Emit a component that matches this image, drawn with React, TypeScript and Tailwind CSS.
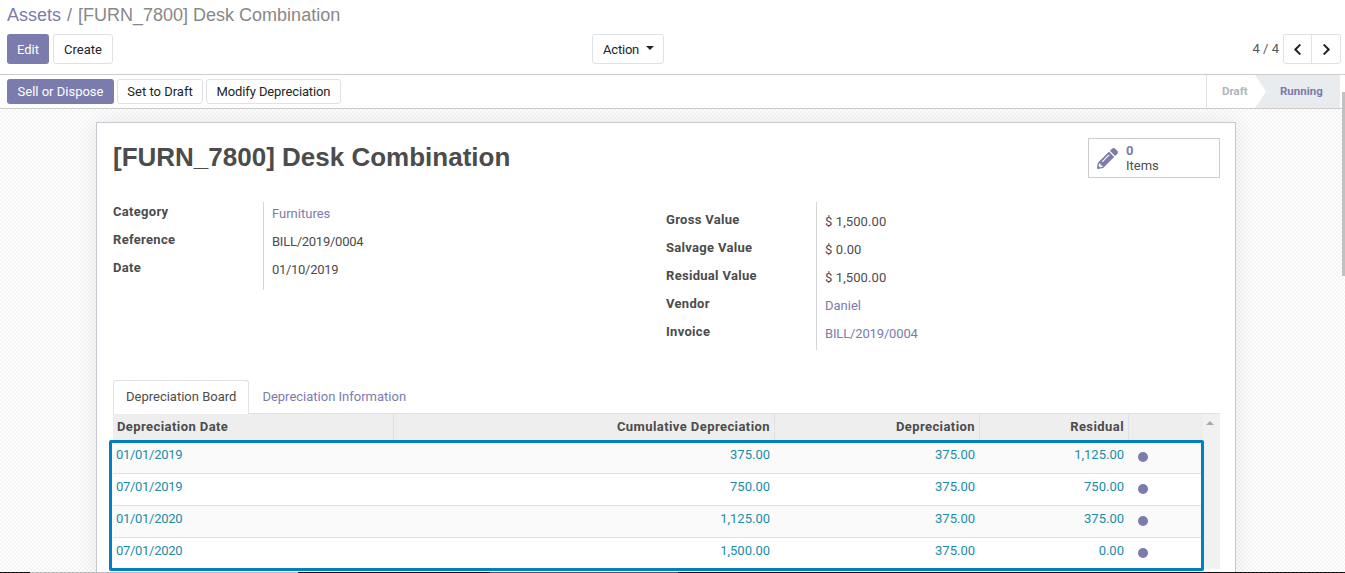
import React from 'react'
import { FaChevronLeft, FaChevronRight, FaPencilAlt } from 'react-icons/fa'

const rows = [
  { date: '01/01/2019', cumulative: '375.00', depreciation: '375.00', residual: '1,125.00' },
  { date: '07/01/2019', cumulative: '750.00', depreciation: '375.00', residual: '750.00' },
  { date: '01/01/2020', cumulative: '1,125.00', depreciation: '375.00', residual: '375.00' },
  { date: '07/01/2020', cumulative: '1,500.00', depreciation: '375.00', residual: '0.00' },
]

const leftFields = [
  { label: 'Category', value: 'Furnitures', link: true },
  { label: 'Reference', value: 'BILL/2019/0004', spacing: 'tracking-[-0.25px]' },
  { label: 'Date', value: '01/10/2019', spacing: 'tracking-[-0.3px]' },
]

const rightFields = [
  { label: 'Gross Value', value: '$ 1,500.00', spacing: 'tracking-[0.1px]' },
  { label: 'Salvage Value', value: '$ 0.00', spacing: 'tracking-[0.1px]' },
  { label: 'Residual Value', value: '$ 1,500.00', spacing: 'tracking-[0.1px]' },
  { label: 'Vendor', value: 'Daniel', link: true },
  { label: 'Invoice', value: 'BILL/2019/0004', link: true, spacing: 'tracking-[-0.15px]' },
]

const btn = 'rounded-[3px] border border-[#dee2e6] bg-white text-[#212529] px-[10px] leading-none whitespace-nowrap'
const btnPrimary = 'rounded-[3px] bg-[#7c7bad] text-white px-[10px] leading-none whitespace-nowrap'
const gridCols = 'grid grid-cols-[281px_381px_205px_149px_74px]'

type Field = { label: string; value: string; link?: boolean; spacing?: string }

const FieldGroup: React.FC<{ fields: Field[]; className: string; labelPad: string; valuePad: string }> = ({
  fields,
  className,
  labelPad,
  valuePad,
}) => (
  <div className={`flex ${className}`}>
    <div className={`w-[150px] shrink-0 ${labelPad}`}>
      {fields.map(f => (
        <div key={f.label} className="h-[28px] font-bold text-[13px] leading-[20px] tracking-[0.3px] text-[#4c4c4c]">
          {f.label}
        </div>
      ))}
    </div>
    <div className={`border-l border-[#d5d5d5] pl-[8px] ${valuePad}`}>
      {fields.map(f => (
        <div
          key={f.label}
          className={`h-[28px] text-[13px] leading-[22px] ${f.spacing ?? ''} ${f.link ? 'text-[#7c7bad]' : 'text-[#4c4c4c]'}`}
        >
          {f.value}
        </div>
      ))}
    </div>
  </div>
)

export default function App() {
  return (
    <div className="h-[573px] w-[1345px] overflow-hidden bg-white relative font-['Roboto',sans-serif]">
      <div className="h-[75px] border-b border-[#ccc] px-[7px]">
        <div className="h-[34px] pt-[3px] text-[18px] leading-[24px] text-[#888] font-['Liberation_Sans',sans-serif]">
          <span className="text-[#7c7bad]">Assets</span>
          <span className="mx-[6px]">/</span>
          <span>[FURN_7800] Desk Combination</span>
        </div>
        <div className="flex h-[30px] items-stretch">
          <div className="flex w-[585px] gap-[4px] text-[13px]">
            <button className={btnPrimary}>Edit</button>
            <button className={btn}>Create</button>
          </div>
          <button className={`${btn} flex items-center text-[13px] tracking-[-0.2px]`}>
            Action
            <span className="ml-[7px] mr-[-1px] mt-[-2px] border-x-[4px] border-t-[4px] border-x-transparent border-t-[#212529]" />
          </button>
          <div className="ml-auto mr-[-3px] flex items-center text-[13px]">
            <span className="mr-[4px] text-[#555]">4 / 4</span>
            <div className="flex h-[30px] rounded-[3px] border border-[#dee2e6] text-[#212529]">
              <span className="flex w-[28px] items-center justify-center border-r border-[#dee2e6]">
                <FaChevronLeft className="h-[13px] w-[13px]" />
              </span>
              <span className="flex w-[28px] items-center justify-center">
                <FaChevronRight className="h-[13px] w-[13px]" />
              </span>
            </div>
          </div>
        </div>
      </div>

      <div className="flex h-[34px] border-b border-[#ccc] pl-[7px]">
        <div className="flex items-center gap-[3px] text-[13px]">
          <button className={`${btnPrimary} h-[25px] w-[107px] !px-0`}>Sell or Dispose</button>
          <button className={`${btn} h-[25px] w-[86px] !px-0`}>Set to Draft</button>
          <button className={`${btn} h-[25px] w-[135px] !px-0 tracking-[-0.12px]`}>Modify Depreciation</button>
        </div>
        <div className="ml-auto mr-[5px] flex text-[11.5px] font-bold">
          <div className="flex w-[49px] items-center border-l border-[#dee2e6] pl-[15px] text-[#adb5bd]">Draft</div>
          <div className="flex w-[85px] items-center bg-[#e9ecef] pl-[25px] text-[#7c7bad] [clip-path:polygon(0_0,100%_0,100%_100%,0_100%,11px_50%)]">
            Running
          </div>
        </div>
      </div>

      <div className="h-[464px] pt-[13px] pl-[96px] bg-[repeating-conic-gradient(#f4f4f4_0%_25%,#ffffff_0%_50%)] bg-[length:4px_4px]">
        <div className="h-[460px] w-[1140px] border border-[#c8c8d0] bg-white pl-[16px] pr-[15px] shadow-[0_0_20px_rgba(0,0,0,0.08)]">
          <div className="flex justify-between">
            <h1 className="pt-[16px] text-[26px] leading-[36px] font-bold text-[#4c4c4c] font-['Liberation_Sans',sans-serif]">
              [FURN_7800] Desk Combination
            </h1>
            <div className="mt-[15px] flex h-[40px] w-[132px] items-center border border-[#ccc] pl-[8px]">
              <FaPencilAlt className="h-[21px] w-[21px] text-[#7c7bad]" />
              <div className="ml-[8px] text-[13px] leading-[15px] text-[#4c4c4c]">
                <div className="font-bold text-[#7c7bad]">0</div>
                <div>Items</div>
              </div>
            </div>
          </div>

          <div className="mt-[24px] flex h-[148px]">
            <div className="w-[553px]">
              <FieldGroup fields={leftFields} className="h-[88px]" labelPad="" valuePad="pt-[1px]" />
            </div>
            <FieldGroup fields={rightFields} className="h-[148px]" labelPad="pt-[8px]" valuePad="pt-[9px]" />
          </div>

          <div className="mt-[30px] h-[34px] flex text-[13px] border-b border-[#dee2e6]">
            <div className="h-[34px] rounded-t-[3px] border border-b-0 border-[#dee2e6] bg-white px-[12px] leading-[32px] text-[#4c4c4c]">
              Depreciation Board
            </div>
            <div className="px-[13px] leading-[34px] text-[#7c7bad]">Depreciation Information</div>
          </div>

          <div className="relative flex bg-[#f1f1f1]">
            <div className="w-[1090px]">
              <div className={`${gridCols} h-[27px] bg-[#eeeeee] text-[13px] font-bold leading-[26px] tracking-[0.42px] text-[#4c4c4c]`}>
                <div className="border-r border-[#dee2e6] pl-[4px]">Depreciation Date</div>
                <div className="border-r border-[#dee2e6] pr-[4px] text-right">Cumulative Depreciation</div>
                <div className="border-r border-[#dee2e6] pr-[4px] text-right">Depreciation</div>
                <div className="border-r border-[#dee2e6] pr-[4px] text-right">Residual</div>
                <div />
              </div>
              {rows.map((r, i) => (
                <div
                  key={r.date}
                  className={`${gridCols} h-[32px] border-t border-[#dee2e6] text-[13px] leading-[26px] text-[#1a8ca8] ${i % 2 === 0 ? 'bg-[#fafafa]' : 'bg-white'}`}
                >
                  <div className="pl-[3px] tracking-[-0.3px]">{r.date}</div>
                  <div className="pr-[5px] text-right">{r.cumulative}</div>
                  <div className="pr-[5px] text-right">{r.depreciation}</div>
                  <div className="pr-[5px] text-right">{r.residual}</div>
                  <div className="pl-[9px] pt-[10px]">
                    <div className="h-[10px] w-[10px] rounded-full bg-[#7c7bad]" />
                  </div>
                </div>
              ))}
            </div>
            <div className="flex-1 pt-[7px] pl-[3px]">
              <div className="h-0 w-0 border-x-[4px] border-b-[4px] border-x-transparent border-b-[#a8a8a8]" />
            </div>
            <div className="absolute left-[-4px] top-[26px] h-[131px] w-[1095px] rounded-[2px] border-[3px] border-[#0080c0]" />
          </div>
        </div>
      </div>

      <div className="absolute right-0 top-[92px] h-[184px] w-[3px] bg-[#c1c1c1]" />

      <div className="absolute bottom-0 left-0 flex h-[1px] w-full bg-[#111]">
        <div className="w-[30px]" />
        <div className="w-[268px] bg-[#bbb]" />
        <div className="w-[192px]" />
        <div className="w-[188px] bg-[#555]" />
      </div>
    </div>
  )
}
